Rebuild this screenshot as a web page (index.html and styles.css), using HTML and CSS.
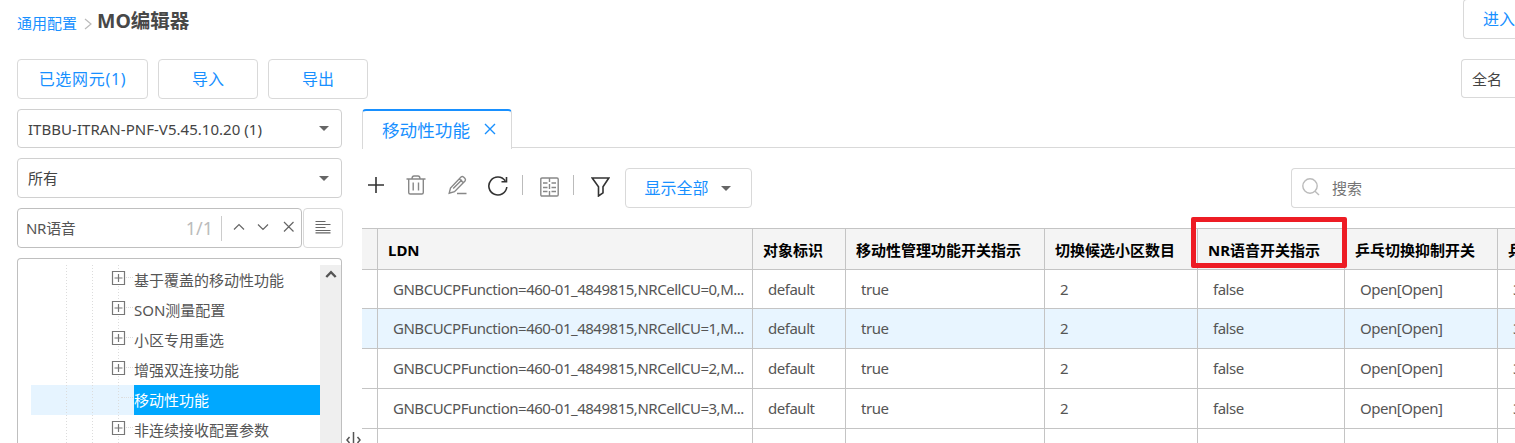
FILE: index.html
```html
<!DOCTYPE html>
<html lang="zh-CN">
<head>
<meta charset="utf-8">
<title>MO编辑器</title>
<link rel="stylesheet" href="styles.css">
</head>
<body>
<div class="app">
  <header class="header">
    <nav class="crumbs">
      <a class="crumb-link">通用配置</a>
      <svg class="crumb-sep" width="8" height="12" viewBox="0 0 8 12"><path d="M1 1l6 5-6 5"/></svg>
      <h1 class="title">MO编辑器</h1>
    </nav>
    <button class="btn btn-enter">进入</button>
  </header>

  <div class="actions">
    <button class="btn btn-selected">已选网元(1)</button>
    <button class="btn">导入</button>
    <button class="btn">导出</button>
    <div class="name-select">全名</div>
  </div>

  <div class="main">
    <aside class="side">
      <div class="select select-ne"><span class="ne-name">ITBBU-ITRAN-PNF-V5.45.10.20 (1)</span><i class="caret"></i></div>
      <div class="select select-all"><span>所有</span><i class="caret"></i></div>
      <div class="find">
        <div class="find-box">
          <span class="find-text">NR语音</span>
          <span class="find-count">1/1</span>
          <svg class="find-icons" width="68" height="14" viewBox="0 0 68 14"><path d="M5 9.500l5-5 5 5M29 4.500l5 5 5-5M55 2l9.500 9.500M64.500 2L55 11.500"/></svg>
        </div>
        <div class="find-menu">
          <svg width="16" height="14" viewBox="0 0 16 14"><path d="M.5 1.500h10M.5 4.500h15M.5 7.500h10M.5 10.500h15M.5 12.800h15"/></svg>
        </div>
      </div>
      <div class="tree">
        <ul class="tree-list">
          <li class="node"><span class="lines"><i></i><i></i><i></i></span><span class="twig"></span><svg class="plus" width="15" height="15" viewBox="0 0 15 15"><path d="M1.500 .5h12v13h-12zM3.500 7h8M7.500 3v8"/></svg><span class="label">基于覆盖的移动性功能</span></li>
          <li class="node"><span class="lines"><i></i><i></i><i></i></span><span class="twig"></span><svg class="plus" width="15" height="15" viewBox="0 0 15 15"><path d="M1.500 .5h12v13h-12zM3.500 7h8M7.500 3v8"/></svg><span class="label">SON测量配置</span></li>
          <li class="node"><span class="lines"><i></i><i></i><i></i></span><span class="twig"></span><svg class="plus" width="15" height="15" viewBox="0 0 15 15"><path d="M1.500 .5h12v13h-12zM3.500 7h8M7.500 3v8"/></svg><span class="label">小区专用重选</span></li>
          <li class="node"><span class="lines"><i></i><i></i><i></i></span><span class="twig"></span><svg class="plus" width="15" height="15" viewBox="0 0 15 15"><path d="M1.500 .5h12v13h-12zM3.500 7h8M7.500 3v8"/></svg><span class="label">增强双连接功能</span></li>
          <li class="node node-active"><span class="lines"><i></i><i></i><i></i></span><span class="twig"></span><span class="label">移动性功能</span></li>
          <li class="node"><span class="lines"><i></i><i></i><i></i></span><span class="twig"></span><svg class="plus" width="15" height="15" viewBox="0 0 15 15"><path d="M1.500 .5h12v13h-12zM3.500 7h8M7.500 3v8"/></svg><span class="label">非连续接收配置参数</span></li>
        </ul>
        <div class="scroll"><svg width="12" height="8" viewBox="0 0 12 8"><path d="M1.300 7L6 2.200 10.700 7"/></svg></div>
      </div>
    </aside>

    <div class="splitter"><svg width="17" height="14" viewBox="0 0 17 14"><path d="M8.500 0v14M4.500 5L2 8l2.500 3M12.500 5L15 8l-2.500 3"/></svg></div>

    <section class="content">
      <div class="tabs">
        <div class="tab"><span>移动性功能</span><svg width="12" height="12" viewBox="0 0 12 12"><path d="M1 1l10 10M11 1L1 11"/></svg></div>
        <div class="tab-rest"></div>
      </div>

      <div class="tools">
        <svg class="icon dark add" width="16" height="16" viewBox="0 0 16 16"><path d="M8 0v16M0 8h16"/></svg>
        <svg class="icon trash" width="20" height="20" viewBox="0 0 20 20"><path d="M.5 4h19M6 3.500Q6.200 1 8 1h4q1.800 0 2 2.500M2.700 4v13.500q0 1.500 1.500 1.500h11.600q1.500 0 1.500-1.500V4M7.200 7.500v8M12.500 7.500v8"/></svg>
        <svg class="icon pencil" width="20" height="20" viewBox="0 0 20 20"><path d="M1.200 18.200l1.300-5.200L13 2q1.300-1 2.500 0l1.500 1.500q1 1.200 0 2.500L6.500 16.700zM11.500 4l4 4M14 4.800L5.200 13.500M9 18.500h9.500"/></svg>
        <svg class="icon dark refresh" width="20" height="20" viewBox="0 0 20 20"><path d="M18.800 11a9 9 0 1 1-1.600-6.200M18.500 1v4.700h-5"/></svg>
        <span class="divider"></span>
        <svg class="icon cols" width="19" height="20" viewBox="0 0 19 20"><path d="M2 1h15q1.200 0 1.200 1.200v15.600Q18.200 19 17 19H2Q.8 19 .8 17.800V2.200Q.8 1 2 1zM9.500 1v4M9.500 7v5M9.500 14v5M3 6h4.500M11.500 6H16M3 10.500h4.500M11.500 10.500H16M3 14.500h4.500M11.500 14.500H16"/></svg>
        <span class="divider"></span>
        <svg class="icon dark funnel" width="19" height="20" viewBox="0 0 19 20"><path d="M1.200 1h16.600L12 9.800v6L7.500 19V9.800z"/></svg>
        <button class="btn btn-show">显示全部<i class="caret"></i></button>
        <div class="search"><svg width="18" height="18" viewBox="0 0 18 18"><circle cx="8" cy="8" r="7.200"/><path d="M13 13.200l4 3.800"/></svg><span>搜索</span></div>
      </div>

      <div class="table">
        <div class="row head"><div></div><div>LDN</div><div>对象标识</div><div>移动性管理功能开关指示</div><div>切换候选小区数目</div><div class="marked">NR语音开关指示</div><div>乒乓切换抑制开关</div><div>乒乓</div></div>
        <div class="row first"><div></div><div>GNBCUCPFunction=460-01_4849815,NRCellCU=0,M...</div><div>default</div><div>true</div><div>2</div><div>false</div><div>Open[Open]</div><div>3</div></div>
        <div class="row hover"><div></div><div>GNBCUCPFunction=460-01_4849815,NRCellCU=1,M...</div><div>default</div><div>true</div><div>2</div><div>false</div><div>Open[Open]</div><div>3</div></div>
        <div class="row"><div></div><div>GNBCUCPFunction=460-01_4849815,NRCellCU=2,M...</div><div>default</div><div>true</div><div>2</div><div>false</div><div>Open[Open]</div><div>3</div></div>
        <div class="row"><div></div><div>GNBCUCPFunction=460-01_4849815,NRCellCU=3,M...</div><div>default</div><div>true</div><div>2</div><div>false</div><div>Open[Open]</div><div>3</div></div>
        <div class="row"><div></div><div></div><div></div><div></div><div></div><div></div><div></div><div></div></div>
      </div>
    </section>
  </div>
</div>
</body>
</html>
```
FILE: styles.css
```css
*, *::after { box-sizing: border-box; }
body {
  margin: 0;
  background: #fff;
  color: #555;
  font: 15px/20px "Noto Sans", "Noto Sans CJK SC", sans-serif;
  overflow: hidden;
}
svg { display: block; fill: none; flex: none; stroke: #666; stroke-width: 1.2; }
.app { height: 443px; padding-left: 17px; overflow: hidden; display: flex; flex-direction: column; }

.header { flex: none; height: 59px; display: flex; justify-content: space-between; overflow: hidden; }
.crumbs { display: flex; height: 42px; align-items: center; }
.crumb-link { color: #1890ff; padding-top: 3px; }
.crumb-sep { margin: 5px 5px 0 7px; stroke: #bbb; }
.title { margin: 0; font-size: 19.5px; line-height: 24px; font-weight: 700; color: #484848; }

.btn {
  width: 100px; height: 40px; padding: 0;
  border: 1px solid #d9d9d9; border-radius: 4px; background: #fff;
  color: #1890ff; font: inherit; font-size: 16px;
}
.btn-enter { width: 52px; margin-top: -1px; padding-left: 19px; border-right: 0; border-radius: 4px 0 0 4px; text-align: left; white-space: nowrap; overflow: hidden; }
.btn-selected { width: 131px; letter-spacing: .7px; }
.actions { flex: none; display: flex; gap: 10px; height: 50px; }
.name-select { margin-left: auto; width: 54px; height: 39px; padding: 9px 0 0 10px; border: 1px solid #d9d9d9; border-right: 0; border-radius: 4px 0 0 4px; color: #444; }

.main { flex: 1; min-height: 0; display: flex; }
.side { width: 326px; flex: none; display: flex; flex-direction: column; gap: 10px; }
.select { width: 325px; height: 40px; flex: none; display: flex; align-items: center; justify-content: space-between; padding: 0 12px 0 10px; border: 1px solid #d0d0d0; border-radius: 4px; color: #444; }
.select-ne { height: 39px; }
.ne-name { letter-spacing: .03px; }
.caret { display: inline-block; border: 5px solid transparent; border-top-color: #666; border-bottom: 0; }

.find { flex: none; height: 40px; display: flex; gap: 1px; }
.find-box { width: 285px; display: flex; align-items: center; padding: 0 4px 0 8px; border: 1px solid #bfbfbf; border-radius: 4px; }
.find-text { flex: 1; letter-spacing: -.3px; }
.find-count { color: #bbb; font-size: 18px; padding-right: 8px; border-right: 1px solid #ccc; line-height: 25px; }
.find-icons { margin-left: 7px; margin-top: -3px; }
.find-menu { width: 40px; display: flex; align-items: center; justify-content: center; padding-bottom: 2px; border: 1px solid #d9d9d9; border-radius: 4px; }

.tree { width: 325px; flex: 1; min-height: 0; display: flex; padding: 6px 0 0 13px; border: 1px solid #bfbfbf; border-bottom: 0; border-radius: 4px 4px 0 0; overflow: hidden; }
.tree-list { flex: 1; margin: 0; padding: 0; list-style: none; }
.node { height: 30px; display: flex; align-items: stretch; position: relative; }
.lines { width: 103px; display: flex; gap: 25px; padding-left: 35px; }
.lines i { width: 1px; background: repeating-linear-gradient(#dcdcdc 0 1px, transparent 1px 3px); }
.twig { position: absolute; left: 90px; top: 12px; width: 12px; border-top: 1px dotted #ddd; }
.plus { position: absolute; left: 80px; top: 6px; background: #fff; stroke: #777; }
.label { flex: 1; line-height: 30px; white-space: nowrap; }
.node-active { background: #e6f4ff; }
.node-active .label { background: #00a8ff; color: #fff; }
.scroll { width: 21px; background: #efefef; padding: 5px 0 0 5px; }
.scroll svg { stroke: #555; stroke-width: 2.4; }

.splitter { width: 19px; flex: none; display: flex; align-items: flex-end; }
.splitter svg { margin-bottom: -3px; margin-left: 2px; stroke: #555; stroke-width: 1.5; }

.content { flex: 1; min-width: 0; overflow: hidden; }
.tabs { display: flex; height: 40px; }
.tab { width: 150px; flex: none; display: flex; align-items: center; gap: 14px; padding: 0 0 3px 19px; border: 1px solid #d9d9d9; border-top: 2px solid #1890ff; border-bottom: 0; border-radius: 4px 4px 0 0; color: #1890ff; font-size: 17.6px; }
.tab span { padding-top: 2px; }
.tab svg { stroke: #1890ff; stroke-width: 1.4; }
.tab-rest { flex: 1; height: 39px; border-bottom: 1px solid #d9d9d9; }

.tools { height: 79px; display: flex; padding-top: 19px; }
.icon { margin-top: 7px; stroke: #888; stroke-width: 1.4; }
.icon.dark { stroke: #333; stroke-width: 1.6; }
.icon.add { margin: 9px 0 0 6px; }
.trash { margin-left: 22px; }
.pencil { margin-left: 22px; }
.refresh { margin-left: 20px; margin-top: 8px; }
.divider { width: 1px; height: 20px; margin: 7px 0 0 14px; background: #bbb; }
.cols { margin-left: 17px; margin-top: 9px; }
.funnel { margin-left: 17px; margin-top: 9px; }
.btn-show { width: 127px; margin-left: 15px; display: flex; align-items: center; justify-content: center; gap: 12px; padding-right: 2px; }
.search { width: 224px; height: 40px; margin-left: auto; display: flex; align-items: center; gap: 12px; padding-left: 10px; border: 1px solid #d9d9d9; border-right: 0; border-radius: 4px 0 0 4px; color: #757575; }
.search svg { margin-top: -3px; stroke: #bbb; stroke-width: 1.4; }

.row { display: grid; grid-template-columns: 16px 375px 93px 199px 153px 147px 153px 17px; height: 40px; border-bottom: 1px solid #c4c4c4; letter-spacing: -.48px; line-height: 39px; }
.row > div { padding-left: 15px; border-right: 1px solid #c4c4c4; white-space: nowrap; overflow: hidden; }
.row > div:last-child { border-right: 0; }
.row.first { height: 39px; }
.row.hover { background: #e8f5ff; }
.row.head { height: 42px; border-top: 1px solid #c4c4c4; background: #f4f4f4; color: #000; font-weight: 700; letter-spacing: 0; line-height: 42px; }
.row.head > div { padding-left: 10px; }
.row.head > .marked { position: relative; overflow: visible; }
.marked::after { content: ""; position: absolute; left: -7px; top: -12px; width: 156px; height: 51px; border: 5px solid #ed1c24; border-radius: 2px; }
```
